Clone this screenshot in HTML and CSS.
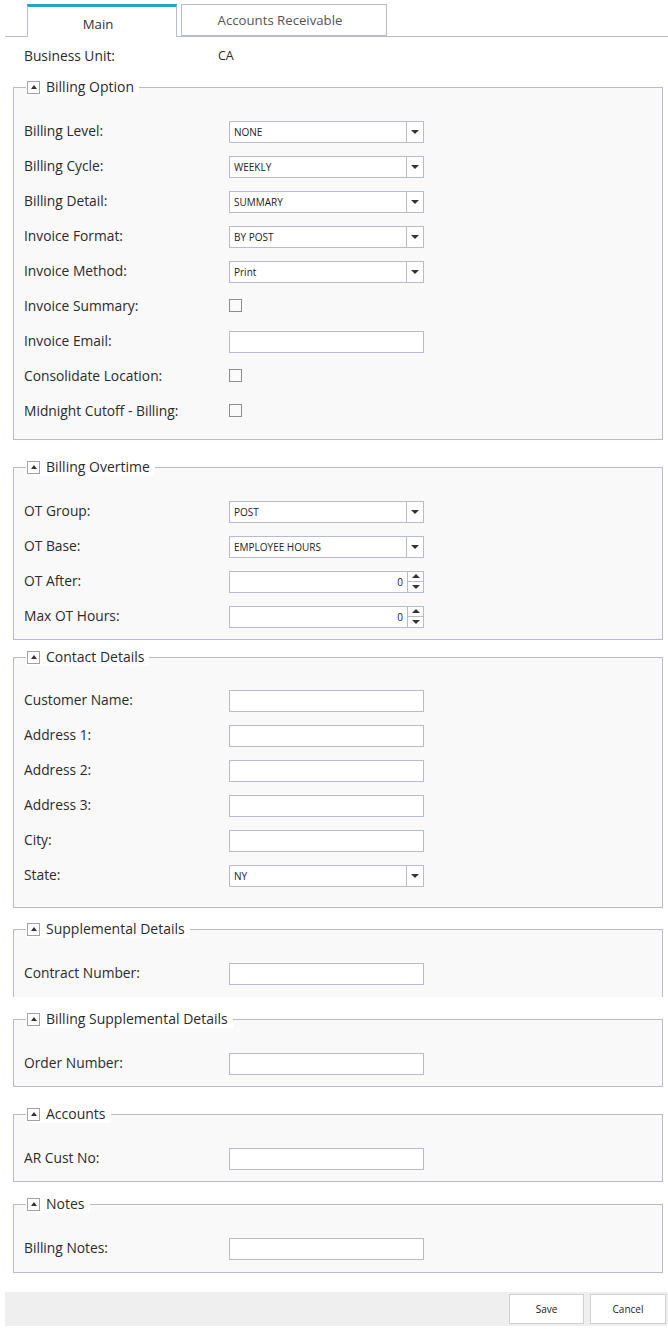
FILE: index.html
```html
<!DOCTYPE html>
<html>
<head>
<meta charset="utf-8">
<link rel="stylesheet" href="styles.css">
</head>
<body>
<div class="page">
  <div class="tabs">
    <div class="tab tab-active">Main</div>
    <div class="tab tab-idle">Accounts Receivable</div>
  </div>

  <div class="bu-row">
    <span class="bu-label">Business Unit:</span>
    <span class="bu-value">CA</span>
  </div>

  <fieldset class="group g1">
    <legend class="legend"><span class="toggle"></span><span class="legend-text">Billing Option</span></legend>
    <div class="row"><span class="label">Billing Level:</span><div class="select"><span class="sel-text">NONE</span><span class="sel-btn"><span class="tri-down"></span></span></div></div>
    <div class="row"><span class="label">Billing Cycle:</span><div class="select"><span class="sel-text">WEEKLY</span><span class="sel-btn"><span class="tri-down"></span></span></div></div>
    <div class="row"><span class="label">Billing Detail:</span><div class="select"><span class="sel-text">SUMMARY</span><span class="sel-btn"><span class="tri-down"></span></span></div></div>
    <div class="row"><span class="label">Invoice Format:</span><div class="select"><span class="sel-text">BY POST</span><span class="sel-btn"><span class="tri-down"></span></span></div></div>
    <div class="row"><span class="label">Invoice Method:</span><div class="select"><span class="sel-text">Print</span><span class="sel-btn"><span class="tri-down"></span></span></div></div>
    <div class="row"><span class="label">Invoice Summary:</span><span class="check"></span></div>
    <div class="row"><span class="label">Invoice Email:</span><span class="input"></span></div>
    <div class="row"><span class="label">Consolidate Location:</span><span class="check"></span></div>
    <div class="row"><span class="label">Midnight Cutoff - Billing:</span><span class="check"></span></div>
  </fieldset>

  <fieldset class="group g2">
    <legend class="legend"><span class="toggle"></span><span class="legend-text">Billing Overtime</span></legend>
    <div class="row"><span class="label">OT Group:</span><div class="select"><span class="sel-text">POST</span><span class="sel-btn"><span class="tri-down"></span></span></div></div>
    <div class="row"><span class="label">OT Base:</span><div class="select"><span class="sel-text">EMPLOYEE HOURS</span><span class="sel-btn"><span class="tri-down"></span></span></div></div>
    <div class="row"><span class="label">OT After:</span><div class="spin"><span class="spin-val">0</span><span class="spin-btns"><span class="spin-up"><span class="tri-up"></span></span><span class="spin-down"><span class="tri-down"></span></span></span></div></div>
    <div class="row"><span class="label">Max OT Hours:</span><div class="spin"><span class="spin-val">0</span><span class="spin-btns"><span class="spin-up"><span class="tri-up"></span></span><span class="spin-down"><span class="tri-down"></span></span></span></div></div>
  </fieldset>

  <fieldset class="group g3">
    <legend class="legend"><span class="toggle"></span><span class="legend-text">Contact Details</span></legend>
    <div class="row"><span class="label">Customer Name:</span><span class="input"></span></div>
    <div class="row"><span class="label">Address 1:</span><span class="input"></span></div>
    <div class="row"><span class="label">Address 2:</span><span class="input"></span></div>
    <div class="row"><span class="label">Address 3:</span><span class="input"></span></div>
    <div class="row"><span class="label">City:</span><span class="input"></span></div>
    <div class="row"><span class="label">State:</span><div class="select"><span class="sel-text">NY</span><span class="sel-btn"><span class="tri-down"></span></span></div></div>
  </fieldset>

  <fieldset class="group g4">
    <legend class="legend"><span class="toggle"></span><span class="legend-text">Supplemental Details</span></legend>
    <div class="row"><span class="label">Contract Number:</span><span class="input"></span></div>
  </fieldset>

  <fieldset class="group g5">
    <legend class="legend"><span class="toggle"></span><span class="legend-text">Billing Supplemental Details</span></legend>
    <div class="row"><span class="label">Order Number:</span><span class="input"></span></div>
  </fieldset>

  <fieldset class="group g6">
    <legend class="legend"><span class="toggle"></span><span class="legend-text">Accounts</span></legend>
    <div class="row"><span class="label">AR Cust No:</span><span class="input"></span></div>
  </fieldset>

  <fieldset class="group g7">
    <legend class="legend"><span class="toggle"></span><span class="legend-text">Notes</span></legend>
    <div class="row"><span class="label">Billing Notes:</span><span class="input"></span></div>
  </fieldset>

  <div class="footer">
    <button class="btn">Save</button>
    <button class="btn">Cancel</button>
  </div>
</div>
</body>
</html>
```

FILE: styles.css
```css
* { box-sizing: border-box; }
html, body { margin: 0; padding: 0; background: #fff; }
body {
  font-family: "Open Sans", "Noto Sans", "DejaVu Sans", sans-serif;
  color: #2b2b2b;
  font-size: 13.8px;
}
.page { width: 668px; }

/* tabs */
.tabs {
  display: flex;
  align-items: flex-start;
  height: 37px;
  margin-left: 5px;
  padding-left: 22px;
  padding-top: 4px;
  border-bottom: 1px solid #b8bbcb;
}
.tab {
  background: #fff;
  text-align: center;
  font-size: 13.2px;
  padding-right: 8px;
}
.tab-active {
  width: 150px;
  height: 33px;
  border-top: 3px solid #20a7c1;
  border-left: 1px solid #b8bbcb;
  border-right: 1px solid #b8bbcb;
  padding-top: 8px;
  color: #333;
  position: relative;
  z-index: 1;
}
.tab-idle {
  width: 206px;
  height: 32px;
  margin-left: 4px;
  border: 1px solid #b8bbcb;
  padding-top: 6px;
  color: #555;
}

/* business unit */
.bu-row {
  display: flex;
  align-items: center;
  height: 36px;
  padding-left: 24px;
}
.bu-label { width: 194px; }
.bu-value { font-size: 12.5px; }

/* groups */
.group {
  margin: 0 5px 0 13px;
  border: 1px solid #b8bbcb;
  background: #f9f9f9;
  padding: 0 10px;
  min-width: 0;
}
.legend {
  display: flex;
  align-items: center;
  height: 18px;
  margin-left: 2px;
  padding: 0 5px 0 1px;
  background: #fff;
}
.toggle {
  width: 13px;
  height: 13px;
  border: 1px solid #a3a3a3;
  background: #fff;
  display: flex;
  align-items: center;
  justify-content: center;
  margin-right: 6px;
}
.toggle::before {
  content: "";
  width: 0; height: 0;
  border-left: 3px solid transparent;
  border-right: 3px solid transparent;
  border-bottom: 4px solid #333;
}
.legend-text { font-size: 14px; color: #2b2b2b; line-height: 18px; }

.g1 { margin-top: 5px; padding-top: 18px; padding-bottom: 10px; }
.g2 { margin-top: 18px; padding-top: 18px; padding-bottom: 5px; }
.g3 { margin-top: 8px; padding-top: 17px; padding-bottom: 14px; }
.g4 { margin-top: 12px; padding-top: 18px; padding-bottom: 6px; border-bottom: none; }
.g5 { margin-top: 13px; padding-top: 18px; padding-bottom: 5px; }
.g6 { margin-top: 18px; padding-top: 18px; padding-bottom: 5px; }
.g7 { margin-top: 13px; padding-top: 18px; padding-bottom: 6px; }

.row {
  display: flex;
  align-items: center;
  height: 35px;
}
.label { width: 205px; flex: none; margin-top: -2px; }

.select, .input, .spin {
  width: 195px;
  height: 22px;
  border: 1px solid #b8bbcb;
  background: #fff;
  flex: none;
}
.select { display: flex; align-items: stretch; }
.sel-text {
  flex: 1;
  font-size: 10px;
  padding-left: 4px;
  display: flex;
  align-items: center;
  color: #222;
}
.sel-btn {
  width: 17px;
  border-left: 1px solid #b8bbcb;
  display: flex;
  align-items: center;
  justify-content: center;
}
.tri-down {
  width: 0; height: 0;
  border-left: 4px solid transparent;
  border-right: 4px solid transparent;
  border-top: 4px solid #333;
}
.tri-up {
  width: 0; height: 0;
  border-left: 4px solid transparent;
  border-right: 4px solid transparent;
  border-bottom: 4px solid #333;
}
.spin { display: flex; align-items: stretch; }
.spin-val {
  flex: 1;
  font-size: 10px;
  text-align: right;
  padding-right: 4px;
  display: flex;
  align-items: center;
  justify-content: flex-end;
  color: #222;
}
.spin-btns {
  width: 16px;
  border-left: 1px solid #b8bbcb;
  display: flex;
  flex-direction: column;
}
.spin-up, .spin-down {
  flex: 1;
  display: flex;
  align-items: center;
  justify-content: center;
}
.spin-up { border-bottom: 1px solid #b8bbcb; }

.check {
  width: 13px;
  height: 13px;
  border: 1px solid #8e8e8e;
  background: #fafafa;
  flex: none;
  margin-top: -3px;
}

/* footer */
.footer {
  margin: 19px 0 0 5px;
  height: 34px;
  background: #efefef;
  display: flex;
  justify-content: flex-end;
  align-items: center;
  gap: 6px;
  padding-right: 2px;
}
.btn {
  height: 30px;
  width: 75px;
  background: #fff;
  border: 1px solid #cfcfcf;
  font-family: "Open Sans", "Noto Sans", sans-serif;
  font-size: 10px;
  color: #222;
  padding: 0;
}
.btn + .btn { width: 76px; }
```
